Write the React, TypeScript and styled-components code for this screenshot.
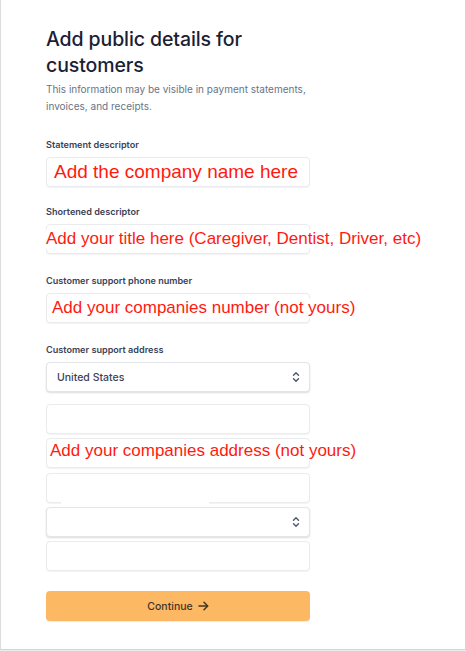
import React from 'react';
import styled, { createGlobalStyle } from 'styled-components';

const GlobalStyle = createGlobalStyle`
  html, body {
    margin: 0;
    padding: 0;
    background: #ececec;
  }
  * {
    box-sizing: border-box;
  }
`;

const Frame = styled.div`
  width: 466px;
  height: 650px;
  background: #ffffff;
  border-left: 1px solid #dcdcdc;
  border-right: 1px solid #d4d4d4;
  border-bottom: 1px solid #d4d4d4;
  padding: 26px 0 0 45px;
  font-family: Inter, 'Noto Sans', sans-serif;
`;

const Form = styled.div`
  width: 264px;
  display: flex;
  flex-direction: column;
`;

const Title = styled.h1`
  margin: 0;
  font-size: 19.5px;
  line-height: 26px;
  font-weight: 500;
  color: #1a1f36;
  letter-spacing: -0.1px;
`;

const Subtitle = styled.p`
  margin: 3px 0 0;
  font-size: 10px;
  line-height: 17px;
  color: #697386;
  width: 280px;
`;

const Field = styled.div<{ $top: number }>`
  display: flex;
  flex-direction: column;
  gap: 5px;
  margin-top: ${(p) => p.$top}px;
`;

const Label = styled.label`
  font-size: 9.1px;
  line-height: 14px;
  font-weight: 600;
  color: #3c4257;
`;

const Stack = styled.div`
  display: flex;
  flex-direction: column;
  gap: 4.3px;
  margin-top: 12px;
`;

const InputBox = styled.div<{ $gap?: boolean }>`
  position: relative;
  height: 30px;
  border: 1px solid #e9ebee;
  border-radius: 4px;
  background: #ffffff;
  box-shadow: 0 1px 1px rgba(0, 0, 0, 0.05);
  display: flex;
  align-items: center;

  ${(p) =>
    p.$gap &&
    `
    &::after {
      content: '';
      position: absolute;
      left: 14px;
      width: 148px;
      bottom: -2px;
      height: 3px;
      background: #ffffff;
    }
  `}
`;

const SelectBox = styled(InputBox)`
  border-color: #e3e5e9;
  box-shadow: 0 1px 2px rgba(0, 0, 0, 0.14);
  padding: 0 9px 0 10px;
  justify-content: space-between;
`;

const SelectValue = styled.span`
  font-size: 10.5px;
  font-weight: 500;
  color: #3c4257;
`;

const Note = styled.span<{ $size: number; $left: number; $shift?: number }>`
  position: absolute;
  left: ${(p) => p.$left}px;
  top: 50%;
  transform: translateY(calc(-50% + ${(p) => p.$shift ?? 0}px));
  white-space: nowrap;
  font-family: 'Liberation Sans', Arial, sans-serif;
  font-size: ${(p) => p.$size}px;
  color: #ff1a10;
  background: #ffffff;
  line-height: 1.1;
`;

const Button = styled.button`
  margin-top: 20px;
  height: 30px;
  border: none;
  border-radius: 4px;
  background: #fdb863;
  box-shadow: 0 1px 1px rgba(0, 0, 0, 0.08);
  display: flex;
  align-items: center;
  justify-content: center;
  gap: 5px;
  font-family: Inter, 'Noto Sans', sans-serif;
  font-size: 10.5px;
  font-weight: 500;
  color: #3f3628;
  cursor: pointer;
`;

const Chevrons = () => (
  <svg width="8" height="12" viewBox="0 0 8 12" fill="none" stroke="#4f566b" strokeWidth="1.4" strokeLinecap="round" strokeLinejoin="round">
    <path d="M1.5 4.3 L4 1.8 L6.5 4.3" />
    <path d="M1.5 7.7 L4 10.2 L6.5 7.7" />
  </svg>
);

const Arrow = () => (
  <svg width="11" height="10" viewBox="0 0 11 10" fill="none" stroke="#3f3628" strokeWidth="1.5" strokeLinecap="round" strokeLinejoin="round">
    <path d="M1 5 H9.5" />
    <path d="M6 1.3 L9.7 5 L6 8.7" />
  </svg>
);

export default function App() {
  return (
    <>
      <GlobalStyle />
      <Frame>
        <Form>
          <Title>
            Add public details for
            <br />
            customers
          </Title>
          <Subtitle>This information may be visible in payment statements, invoices, and receipts.</Subtitle>

          <Field $top={23}>
            <Label>Statement descriptor</Label>
            <InputBox>
              <Note $size={19} $left={7}>Add the company name here</Note>
            </InputBox>
          </Field>

          <Field $top={18}>
            <Label>Shortened descriptor</Label>
            <InputBox>
              <Note $size={17} $left={-1}>Add your title here (Caregiver, Dentist, Driver, etc)</Note>
            </InputBox>
          </Field>

          <Field $top={20}>
            <Label>Customer support phone number</Label>
            <InputBox>
              <Note $size={17} $left={5}>Add your companies number (not yours)</Note>
            </InputBox>
          </Field>

          <Field $top={20}>
            <Label>Customer support address</Label>
            <SelectBox>
              <SelectValue>United States</SelectValue>
              <Chevrons />
            </SelectBox>
          </Field>

          <Stack>
            <InputBox />
            <InputBox>
              <Note $size={17} $left={3} $shift={-2}>Add your companies address (not yours)</Note>
            </InputBox>
            <InputBox $gap />
            <SelectBox>
              <span />
              <Chevrons />
            </SelectBox>
            <InputBox />
          </Stack>

          <Button>
            Continue
            <Arrow />
          </Button>
        </Form>
      </Frame>
    </>
  );
}
